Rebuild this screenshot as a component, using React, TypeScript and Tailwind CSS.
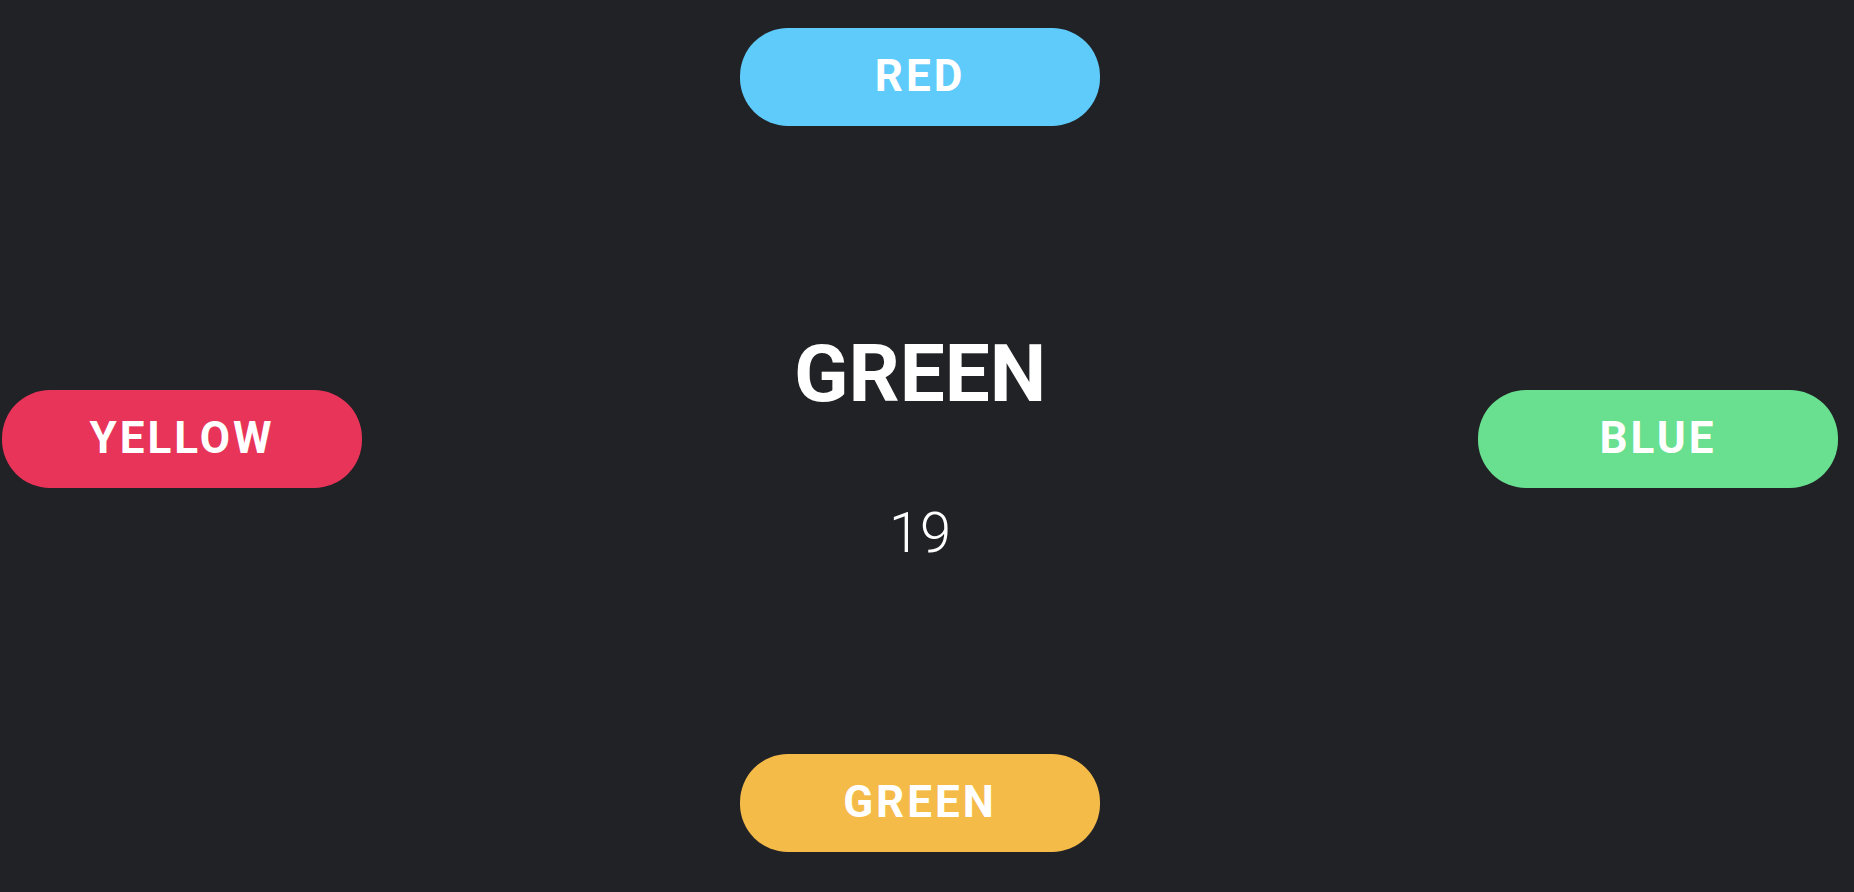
// Farb-Spiel: Wort in der Mitte, vier Antwort-Buttons ringsum.

const answers = {
  top: { label: "RED", bg: "bg-[#5ecbfa]" },
  left: { label: "YELLOW", bg: "bg-[#e83459]" },
  right: { label: "BLUE", bg: "bg-[#68e08f]" },
  bottom: { label: "GREEN", bg: "bg-[#f5bb49]" },
};

function AnswerButton({ label, bg }: { label: string; bg: string }) {
  return (
    <button
      type="button"
      className={`${bg} flex h-[98px] w-[360px] items-center justify-center rounded-[48px] pb-[3px] text-[44px] leading-none font-bold tracking-[3px] text-white`}
    >
      {label}
    </button>
  );
}

export default function App() {
  return (
    <div className="h-[892px] w-full overflow-hidden bg-[#212226] font-['Roboto',sans-serif]">
      <div className="ml-[2px] flex w-[1836px] flex-col items-center pt-[28px]">
        <AnswerButton {...answers.top} />

        <div className="mt-[208px] grid w-full grid-cols-[360px_1fr_360px] items-start">
          <div className="mt-[56px]">
            <AnswerButton {...answers.left} />
          </div>
          <div className="flex flex-col items-center text-white">
            <h1 className="text-[80px] leading-none font-bold">GREEN</h1>
            <p className="mt-[91px] text-[56px] leading-none font-light">19</p>
          </div>
          <div className="mt-[56px]">
            <AnswerButton {...answers.right} />
          </div>
        </div>

        <div className="mt-[193px]">
          <AnswerButton {...answers.bottom} />
        </div>
      </div>
    </div>
  );
}
